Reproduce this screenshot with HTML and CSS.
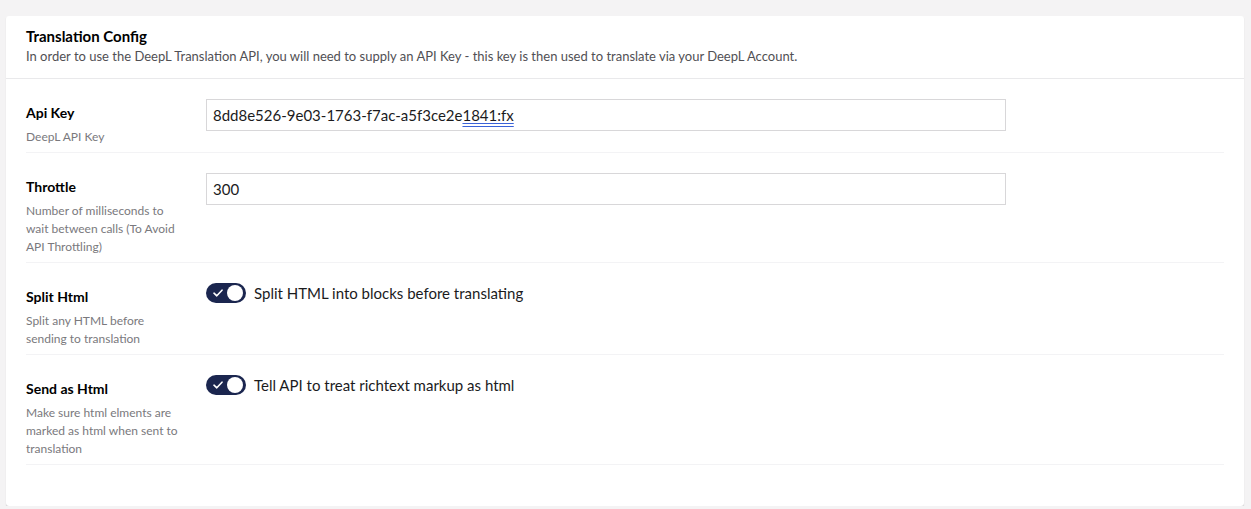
FILE: index.html
```html
<!DOCTYPE html>
<html lang="en">
<head>
<meta charset="utf-8">
<title>Translation Config</title>
<link rel="stylesheet" href="styles.css">
</head>
<body>
<div class="page">
  <div class="box">
    <div class="box-header">
      <div class="box-title">Translation Config</div>
      <div class="box-desc">In order to use the DeepL Translation API, you will need to supply an API Key - this key is then used to translate via your DeepL Account.</div>
    </div>
    <div class="box-content">
      <div class="row">
        <div class="label-col">
          <div class="label">Api Key</div>
          <div class="desc">DeepL API Key</div>
        </div>
        <div class="editor">
          <div class="input">8dd8e526-9e03-1763-f7ac-a5f3ce2e<span class="mark">1841:fx</span></div>
        </div>
      </div>
      <div class="row">
        <div class="label-col">
          <div class="label">Throttle</div>
          <div class="desc">Number of milliseconds to wait between calls (To Avoid API Throttling)</div>
        </div>
        <div class="editor">
          <div class="input">300</div>
        </div>
      </div>
      <div class="row">
        <div class="label-col">
          <div class="label">Split Html</div>
          <div class="desc">Split any HTML before sending to translation</div>
        </div>
        <div class="editor">
          <div class="toggle-line">
            <span class="toggle">
              <svg class="check" width="10" height="8" viewBox="0 0 10 8"><path d="M1 4.2 L3.8 6.8 L9 1.2" fill="none" stroke="#fff" stroke-width="1.6" stroke-linecap="round" stroke-linejoin="round"/></svg>
              <span class="knob"></span>
            </span>
            <span class="toggle-label">Split HTML into blocks before translating</span>
          </div>
        </div>
      </div>
      <div class="row">
        <div class="label-col">
          <div class="label">Send as Html</div>
          <div class="desc">Make sure html elments are marked as html when sent to translation</div>
        </div>
        <div class="editor">
          <div class="toggle-line">
            <span class="toggle">
              <svg class="check" width="10" height="8" viewBox="0 0 10 8"><path d="M1 4.2 L3.8 6.8 L9 1.2" fill="none" stroke="#fff" stroke-width="1.6" stroke-linecap="round" stroke-linejoin="round"/></svg>
              <span class="knob"></span>
            </span>
            <span class="toggle-label">Tell API to treat richtext markup as html</span>
          </div>
        </div>
      </div>
    </div>
  </div>
</div>
</body>
</html>
```

FILE: styles.css
```css
html, body {
  margin: 0;
  padding: 0;
  background: #f4f3f4;
  font-family: Lato, "Noto Sans", sans-serif;
  color: #1b1b1d;
}

.page {
  padding: 16px 7px 0 6px;
}

.box {
  background: #fff;
  border-radius: 3px;
  box-shadow: 0 1px 1px rgba(0, 0, 0, 0.18);
}

.box-header {
  padding: 10px 20px 12px 20px;
  border-bottom: 1px solid #e9e9eb;
}

.box-title {
  font-size: 15px;
  font-weight: 700;
  line-height: 20px;
  color: #000;
}

.box-desc {
  font-size: 13px;
  line-height: 20px;
  color: #515054;
}

.box-content {
  padding: 0 20px 41px 20px;
}

.row {
  display: flex;
  padding: 20px 0 6px 0;
  border-bottom: 1px solid #f3f3f5;
}

.label-col {
  width: 180px;
  flex: none;
  padding-top: 4px;
}

.label {
  font-size: 14px;
  font-weight: 700;
  line-height: 20px;
  color: #000;
}

.desc {
  margin-top: 5px;
  font-size: 12px;
  line-height: 18px;
  color: #7a797d;
  width: 160px;
}

.editor {
  flex: 1;
}

.input {
  width: 800px;
  height: 32px;
  box-sizing: border-box;
  border: 1px solid #d8d7d9;
  padding: 0 6px;
  font-size: 15px;
  line-height: 30px;
  color: #1b1b1d;
}

.mark {
  text-decoration: underline double #3a62d8;
  text-underline-offset: 2px;
}

.toggle-line {
  display: flex;
  align-items: center;
  gap: 8px;
  margin-top: -1px;
}

.toggle {
  position: relative;
  width: 40px;
  height: 20px;
  border-radius: 10px;
  background: #1b264f;
  flex: none;
  margin-top: 1px;
}

.check {
  position: absolute;
  left: 7px;
  top: 6px;
}

.knob {
  position: absolute;
  right: 3px;
  top: 2px;
  width: 16px;
  height: 16px;
  border-radius: 50%;
  background: #fff;
}

.toggle-label {
  font-size: 15px;
  line-height: 20px;
  color: #1b1b1d;
}
```
